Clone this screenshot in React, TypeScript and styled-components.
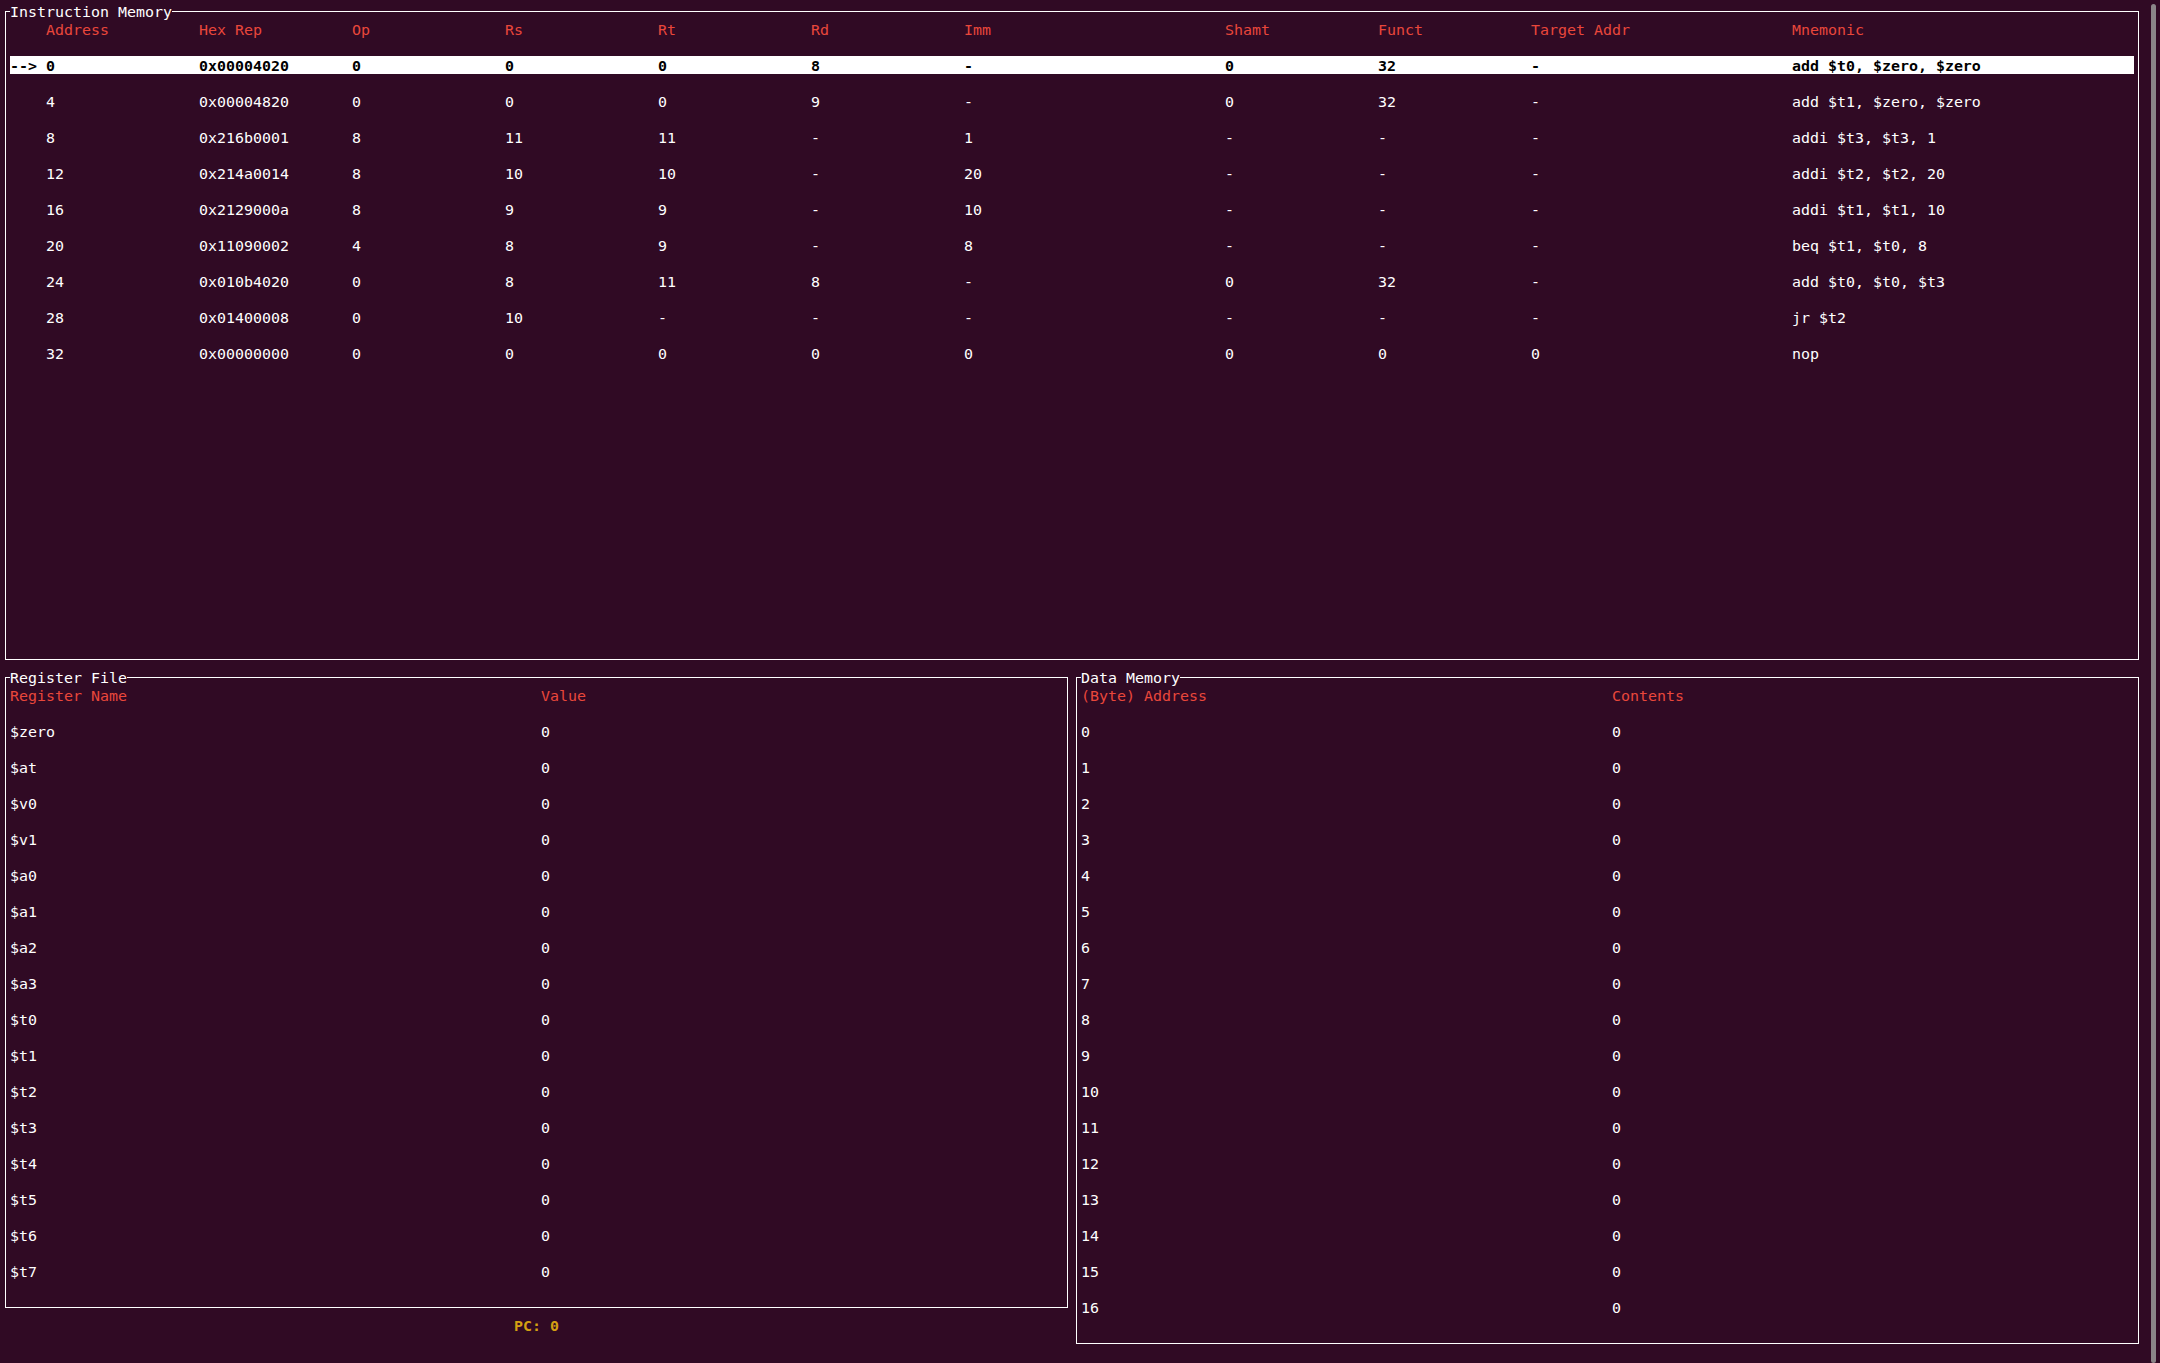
import React from 'react';
import styled, { createGlobalStyle } from 'styled-components';

const BG = '#300a24';
const FG = '#ffffff';
const HEAD = '#e9473b';
const PC_COLOR = '#d4a012';

const GlobalStyle = createGlobalStyle`
  html, body {
    margin: 0;
    padding: 0;
    background: ${BG};
  }
  body {
    width: 2160px;
    height: 1363px;
    overflow: hidden;
    font-family: "DejaVu Sans Mono", "Liberation Mono", monospace;
  }
`;

const Screen = styled.div`
  display: flex;
  width: 2160px;
  height: 1363px;
  background: ${BG};
  color: ${FG};
  font-family: "DejaVu Sans Mono", "Liberation Mono", monospace;
  font-size: 14.95px;
  line-height: 18px;
  overflow: hidden;
`;

const Terminal = styled.main`
  display: flex;
  flex-direction: column;
  width: 2142px;
  padding: 2px 0 0 1px;
`;

const ScrollTrack = styled.div`
  flex: 1;
  display: flex;
  padding: 4px 0 0 8px;
`;

const ScrollThumb = styled.div`
  width: 5px;
  height: 100%;
  background: #8a8588;
  border-radius: 3px;
`;

const Panel = styled.section<{ $lines: number }>`
  position: relative;
  margin: 9px 4px 8px 4px;
  border: 1px solid ${FG};
  padding: 8px 4px 9px 4px;
  height: ${(p) => (p.$lines - 2) * 18}px;
`;

const PanelTitle = styled.h2`
  position: absolute;
  top: -10px;
  left: 4px;
  margin: 0;
  height: 18px;
  font: inherit;
  line-height: 20px;
  color: ${FG};
  background: ${BG};
  white-space: pre;
`;

const INSTR_COLS = '189px repeat(5, 153px) 261px 153px 153px 261px 342px';

const InstrTable = styled.div`
  display: flex;
  flex-direction: column;
  gap: 18px;
`;

const InstrRow = styled.div<{ $active?: boolean; $head?: boolean }>`
  display: grid;
  grid-template-columns: ${INSTR_COLS};
  grid-template-rows: 18px;
  height: 18px;
  background: ${(p) => (p.$active ? '#ffffff' : 'transparent')};
  color: ${(p) => (p.$head ? HEAD : p.$active ? '#000000' : FG)};
  font-weight: ${(p) => (p.$active ? 700 : 400)};
`;

const Cell = styled.span`
  white-space: pre;
  line-height: 20px;
  height: 18px;
`;

const Bottom = styled.div`
  display: flex;
`;

const SideColumn = styled.div`
  display: flex;
  flex-direction: column;
  width: 1071px;
`;

const PcLine = styled.div`
  height: 18px;
  line-height: 20px;
  text-align: center;
  color: ${PC_COLOR};
  font-weight: 700;
`;

const PairTable = styled.div`
  display: flex;
  flex-direction: column;
  gap: 18px;
`;

const PairRow = styled.div<{ $head?: boolean }>`
  display: grid;
  grid-template-columns: 531px 522px;
  grid-template-rows: 18px;
  height: 18px;
  color: ${(p) => (p.$head ? HEAD : FG)};
`;

type Instr = {
  addr: string;
  hex: string;
  op: string;
  rs: string;
  rt: string;
  rd: string;
  imm: string;
  shamt: string;
  funct: string;
  target: string;
  mnemonic: string;
};

const instructions: Instr[] = [
  { addr: '0', hex: '0x00004020', op: '0', rs: '0', rt: '0', rd: '8', imm: '-', shamt: '0', funct: '32', target: '-', mnemonic: 'add $t0, $zero, $zero' },
  { addr: '4', hex: '0x00004820', op: '0', rs: '0', rt: '0', rd: '9', imm: '-', shamt: '0', funct: '32', target: '-', mnemonic: 'add $t1, $zero, $zero' },
  { addr: '8', hex: '0x216b0001', op: '8', rs: '11', rt: '11', rd: '-', imm: '1', shamt: '-', funct: '-', target: '-', mnemonic: 'addi $t3, $t3, 1' },
  { addr: '12', hex: '0x214a0014', op: '8', rs: '10', rt: '10', rd: '-', imm: '20', shamt: '-', funct: '-', target: '-', mnemonic: 'addi $t2, $t2, 20' },
  { addr: '16', hex: '0x2129000a', op: '8', rs: '9', rt: '9', rd: '-', imm: '10', shamt: '-', funct: '-', target: '-', mnemonic: 'addi $t1, $t1, 10' },
  { addr: '20', hex: '0x11090002', op: '4', rs: '8', rt: '9', rd: '-', imm: '8', shamt: '-', funct: '-', target: '-', mnemonic: 'beq $t1, $t0, 8' },
  { addr: '24', hex: '0x010b4020', op: '0', rs: '8', rt: '11', rd: '8', imm: '-', shamt: '0', funct: '32', target: '-', mnemonic: 'add $t0, $t0, $t3' },
  { addr: '28', hex: '0x01400008', op: '0', rs: '10', rt: '-', rd: '-', imm: '-', shamt: '-', funct: '-', target: '-', mnemonic: 'jr $t2' },
  { addr: '32', hex: '0x00000000', op: '0', rs: '0', rt: '0', rd: '0', imm: '0', shamt: '0', funct: '0', target: '0', mnemonic: 'nop' },
];

const headers = ['    Address', 'Hex Rep', 'Op', 'Rs', 'Rt', 'Rd', 'Imm', 'Shamt', 'Funct', 'Target Addr', 'Mnemonic'];

const registers = ['$zero', '$at', '$v0', '$v1', '$a0', '$a1', '$a2', '$a3', '$t0', '$t1', '$t2', '$t3', '$t4', '$t5', '$t6', '$t7'];

const pc = 0;

export default function App() {
  return (
    <>
      <GlobalStyle />
      <Screen>
        <Terminal>
          <Panel $lines={37}>
            <PanelTitle>Instruction Memory</PanelTitle>
            <InstrTable>
              <InstrRow $head>
                {headers.map((h) => (
                  <Cell key={h}>{h}</Cell>
                ))}
              </InstrRow>
              {instructions.map((ins) => {
                const active = Number(ins.addr) === pc;
                return (
                  <InstrRow key={ins.addr} $active={active}>
                    <Cell>{(active ? '--> ' : '    ') + ins.addr}</Cell>
                    <Cell>{ins.hex}</Cell>
                    <Cell>{ins.op}</Cell>
                    <Cell>{ins.rs}</Cell>
                    <Cell>{ins.rt}</Cell>
                    <Cell>{ins.rd}</Cell>
                    <Cell>{ins.imm}</Cell>
                    <Cell>{ins.shamt}</Cell>
                    <Cell>{ins.funct}</Cell>
                    <Cell>{ins.target}</Cell>
                    <Cell>{ins.mnemonic}</Cell>
                  </InstrRow>
                );
              })}
            </InstrTable>
          </Panel>
          <Bottom>
            <SideColumn>
              <Panel $lines={36}>
                <PanelTitle>Register File</PanelTitle>
                <PairTable>
                  <PairRow $head>
                    <Cell>Register Name</Cell>
                    <Cell>Value</Cell>
                  </PairRow>
                  {registers.map((r) => (
                    <PairRow key={r}>
                      <Cell>{r}</Cell>
                      <Cell>0</Cell>
                    </PairRow>
                  ))}
                </PairTable>
              </Panel>
              <PcLine>PC: {pc}</PcLine>
            </SideColumn>
            <SideColumn>
              <Panel $lines={38}>
                <PanelTitle>Data Memory</PanelTitle>
                <PairTable>
                  <PairRow $head>
                    <Cell>(Byte) Address</Cell>
                    <Cell>Contents</Cell>
                  </PairRow>
                  {Array.from({ length: 17 }, (_, i) => (
                    <PairRow key={i}>
                      <Cell>{i}</Cell>
                      <Cell>0</Cell>
                    </PairRow>
                  ))}
                </PairTable>
              </Panel>
            </SideColumn>
          </Bottom>
        </Terminal>
        <ScrollTrack>
          <ScrollThumb />
        </ScrollTrack>
      </Screen>
    </>
  );
}
